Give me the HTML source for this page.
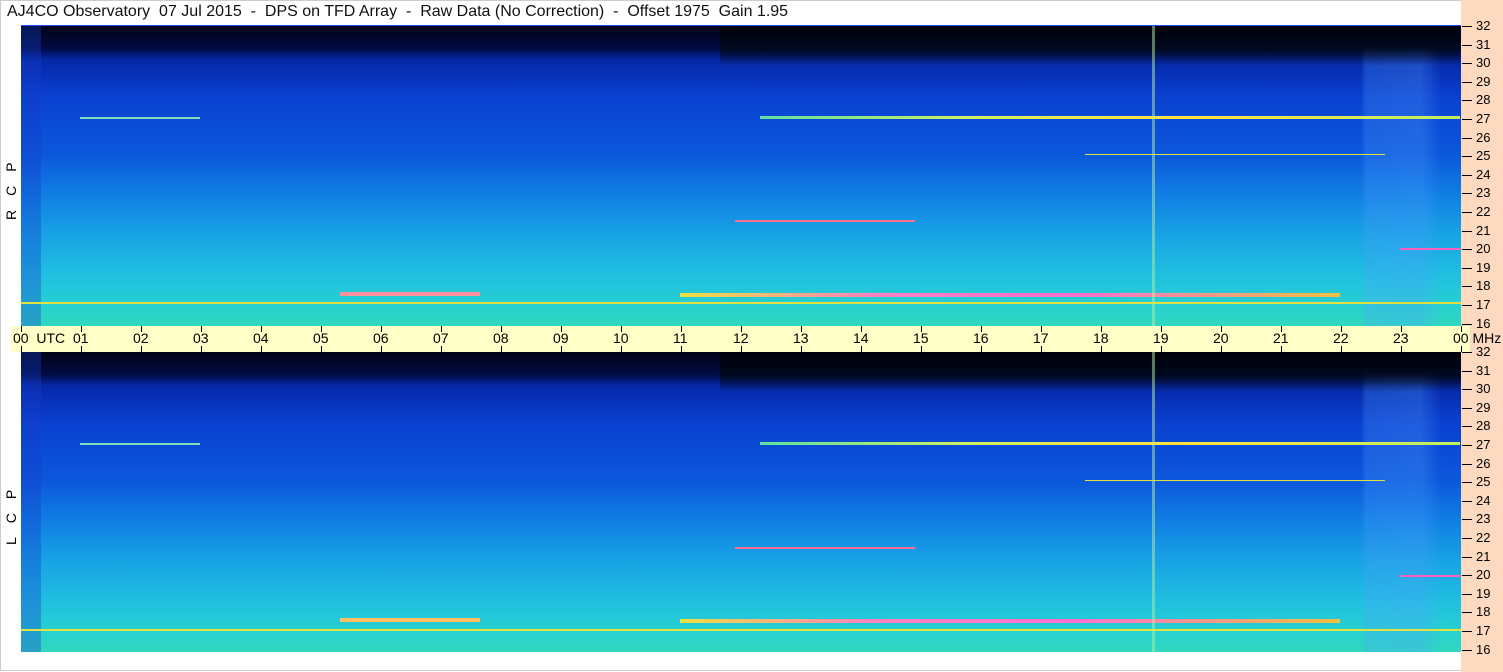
<!DOCTYPE html>
<html><head><meta charset="utf-8"><style>
body{margin:0;width:1503px;height:672px;background:#fff;position:relative;overflow:hidden;font-family:"Liberation Sans",sans-serif;}
.t{position:absolute;left:7px;top:3px;font-size:16px;color:#111;white-space:pre;}
.border{position:absolute;left:0;top:0;width:1502px;height:671px;border:1px solid #ccc;box-sizing:border-box;}
.peach{position:absolute;left:1461px;top:0;width:42px;height:672px;background:#fcd9bf;}
.sp{position:absolute;left:21px;width:1440px;height:300px;
background:
linear-gradient(90deg,rgba(20,60,200,.35) 0,rgba(20,60,200,.35) 20px,transparent 20px),
linear-gradient(90deg,transparent 0,transparent 1340px,rgba(80,160,255,.25) 1345px,rgba(80,160,255,.3) 1400px,transparent 1420px),
linear-gradient(180deg,#000418 0,#000a40 22px,#0628a8 34px,#0a40d0 70px,#0c58dc 130px,#1080e4 170px,#18a4e4 210px,#20c0e0 250px,#28d0d0 280px,#30d8c0 300px);}
.dark{position:absolute;left:720px;width:740px;height:40px;background:linear-gradient(180deg,#000008 0,#00081c 20px,rgba(0,10,60,0) 40px);}
.ln{position:absolute;height:2px;}
.band{position:absolute;left:11px;top:326px;width:1459px;height:26px;background:#ffffc8;}
.tk{position:absolute;font-size:14px;color:#000;}
.tick{position:absolute;width:1px;height:6px;background:#000;}
.ml{position:absolute;left:1462px;font-size:13px;color:#000;}
.ml:before{content:"";display:inline-block;width:10px;height:1px;background:#000;vertical-align:middle;margin-right:4px;}
.v{position:absolute;left:3px;font-size:14px;transform:rotate(-90deg);transform-origin:left top;letter-spacing:14px;white-space:nowrap;}
</style></head><body>
<div class="border"></div>
<div class="peach"></div>
<div class="t">AJ4CO Observatory  07 Jul 2015  -  DPS on TFD Array  -  Raw Data (No Correction)  -  Offset 1975  Gain 1.95</div>
<div style="position:absolute;left:21px;top:25px;width:1440px;height:1px;background:#2050ff"></div>
<div class="sp" style="top:26px"></div>
<div class="dark" style="top:26px"></div>
<div class="sp" style="top:352px"></div>
<div class="dark" style="top:352px"></div>
<div class="ln" style="top:116px;left:760px;width:700px;background:linear-gradient(90deg,#60e0a0,#d0f060 30%,#ffe040 60%,#c0f060);height:3px"></div>
<div class="ln" style="top:117px;left:80px;width:120px;background:#80e0c0"></div>
<div class="ln" style="top:292px;left:340px;width:140px;background:#ff90a0;height:4px"></div>
<div class="ln" style="top:293px;left:680px;width:660px;background:linear-gradient(90deg,#f0e040,#ff80c0 30%,#ff70d0 60%,#f0c040);height:4px"></div>
<div class="ln" style="top:302px;left:21px;width:1440px;background:#e0e040;height:2px"></div>
<div class="ln" style="top:220px;left:735px;width:180px;background:#ff7090"></div>
<div class="ln" style="top:154px;left:1085px;width:300px;background:#e0e040;height:1px"></div>
<div class="ln" style="top:248px;left:1400px;width:60px;background:#ff60c0"></div>
<div class="ln" style="top:442px;left:760px;width:700px;background:linear-gradient(90deg,#60e0a0,#d0f060 30%,#ffe040 60%,#c0f060);height:3px"></div>
<div class="ln" style="top:443px;left:80px;width:120px;background:#80e0c0"></div>
<div class="ln" style="top:618px;left:340px;width:140px;background:#ffc060;height:4px"></div>
<div class="ln" style="top:619px;left:680px;width:660px;background:linear-gradient(90deg,#f0e040,#ff80c0 30%,#ff70d0 60%,#f0c040);height:4px"></div>
<div class="ln" style="top:629px;left:21px;width:1440px;background:#e0e040;height:2px"></div>
<div class="ln" style="top:547px;left:735px;width:180px;background:#ff7090"></div>
<div class="ln" style="top:480px;left:1085px;width:300px;background:#e0e040;height:1px"></div>
<div class="ln" style="top:575px;left:1400px;width:60px;background:#ff60c0"></div>
<div style="position:absolute;left:1152px;top:26px;width:3px;height:626px;background:rgba(180,240,160,.5)"></div>
<div class="band"></div>
<div class="v" style="top:220px">RCP</div>
<div class="v" style="top:545px">LCP</div>
<div id="ax"></div>
<script>
var h='';
for(var i=0;i<=24;i++){var x=21+i*60;var l=(i%24<10?'0':'')+(i%24);
h+='<div class="tick" style="left:'+x+'px;top:326px"></div><div class="tick" style="left:'+x+'px;top:346px"></div>';
var lab=l; if(i==0)lab='00&nbsp; UTC'; if(i==24)lab='00 MHz';
h+='<div class="tk" style="left:'+(x-8)+'px;top:330px">'+lab+'</div>';}
for(var m=16;m<=32;m++){var y1=26+(32-m)*18.6, y2=352+(32-m)*18.6;
h+='<div class="ml" style="top:'+(y1-8)+'px">'+m+'</div><div class="ml" style="top:'+(y2-8)+'px">'+m+'</div>';}
document.getElementById('ax').innerHTML=h;
</script>
</body></html>
